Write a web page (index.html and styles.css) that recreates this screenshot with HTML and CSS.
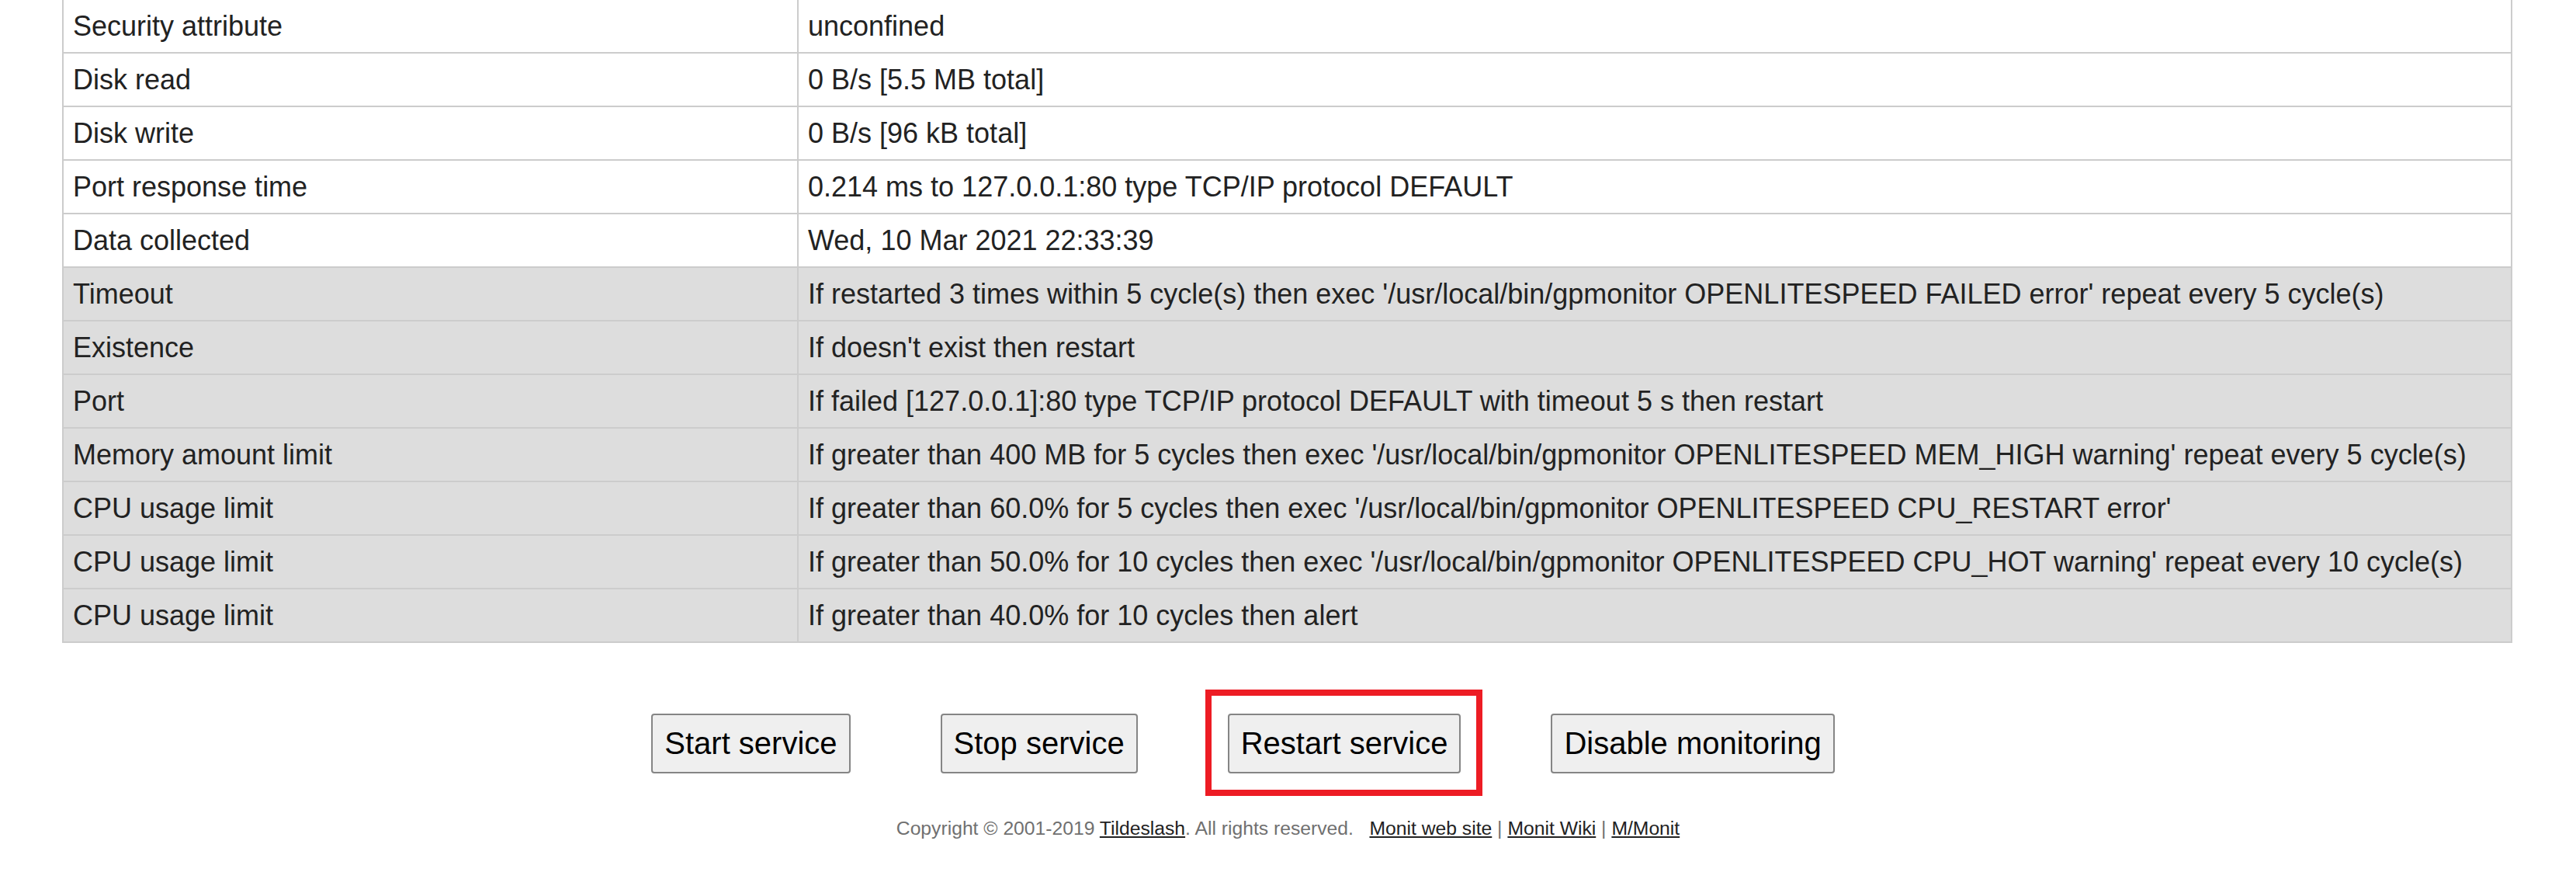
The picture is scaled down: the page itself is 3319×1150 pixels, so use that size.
FILE: index.html
```html
<!DOCTYPE html>
<html lang="en">
  <head>
    <meta charset="utf-8" />
    <title>Monit: openlitespeed</title>
    <link rel="stylesheet" href="styles.css">
  </head>
  <body>
    <div class="content">
      <table class="status">
        <tr><td class="key">Security attribute</td><td>unconfined</td></tr>
        <tr><td class="key">Disk read</td><td>0 B/s [5.5 MB total]</td></tr>
        <tr><td class="key">Disk write</td><td>0 B/s [96 kB total]</td></tr>
        <tr><td class="key">Port response time</td><td>0.214 ms to 127.0.0.1:80 type TCP/IP protocol DEFAULT</td></tr>
        <tr><td class="key">Data collected</td><td>Wed, 10 Mar 2021 22:33:39</td></tr>
        <tr class="rule"><td class="key">Timeout</td><td>If restarted 3 times within 5 cycle(s) then exec '/usr/local/bin/gpmonitor OPENLITESPEED FAILED error' repeat every 5 cycle(s)</td></tr>
        <tr class="rule"><td class="key">Existence</td><td>If doesn't exist then restart</td></tr>
        <tr class="rule"><td class="key">Port</td><td>If failed [127.0.0.1]:80 type TCP/IP protocol DEFAULT with timeout 5 s then restart</td></tr>
        <tr class="rule"><td class="key">Memory amount limit</td><td>If greater than 400 MB for 5 cycles then exec '/usr/local/bin/gpmonitor OPENLITESPEED MEM_HIGH warning' repeat every 5 cycle(s)</td></tr>
        <tr class="rule"><td class="key">CPU usage limit</td><td>If greater than 60.0% for 5 cycles then exec '/usr/local/bin/gpmonitor OPENLITESPEED CPU_RESTART error'</td></tr>
        <tr class="rule"><td class="key">CPU usage limit</td><td>If greater than 50.0% for 10 cycles then exec '/usr/local/bin/gpmonitor OPENLITESPEED CPU_HOT warning' repeat every 10 cycle(s)</td></tr>
        <tr class="rule"><td class="key">CPU usage limit</td><td>If greater than 40.0% for 10 cycles then alert</td></tr>
      </table>

      <div class="actions">
        <div class="action"><button class="btn">Start service</button></div>
        <div class="action"><button class="btn">Stop service</button></div>
        <div class="action marked"><button class="btn">Restart service</button></div>
        <div class="action"><button class="btn">Disable monitoring</button></div>
      </div>

      <p class="footer">
        Copyright &copy; 2001-2019 <a href="#">Tildeslash</a>. All rights reserved. &nbsp;&nbsp;<a href="#">Monit web site</a> | <a href="#">Monit Wiki</a> | <a href="#">M/Monit</a>
      </p>
    </div>
  </body>
</html>
```

FILE: styles.css
```css
html,
body {
  margin: 0;
  padding: 0;
  background-color: #ffffff;
}
body {
  color: #222222;
  font-family: "Liberation Sans", Arial, Helvetica, sans-serif;
  font-size: 36px;
}
.content {
  width: 100%;
}
.status {
  margin: 0 82px 0 80px;
  width: calc(100% - 162px);
  border-collapse: separate;
  border-spacing: 0;
  border-left: 2px solid #cccccc;
  border-right: 2px solid #cccccc;
  table-layout: fixed;
}
.status td {
  padding: 14px 12px 13px;
  border-bottom: 2px solid #cccccc;
  background: #ffffff;
  line-height: 40px;
  white-space: nowrap;
}
.status td.key {
  box-sizing: border-box;
  width: 947px;
  border-right: 2px solid #cccccc;
}
.status tr.rule td {
  background: #dddddd;
}
.actions {
  display: flex;
  justify-content: center;
  margin-top: 91px;
}
.action {
  position: relative;
  margin-right: 116px;
}
.marked::after {
  content: "";
  position: absolute;
  top: -31px;
  bottom: -29px;
  left: -29px;
  right: -28px;
  border: 8px solid #ed1c24;
  pointer-events: none;
}
.btn {
  font-family: "Liberation Sans", Arial, Helvetica, sans-serif;
  font-size: 40px;
  line-height: 46px;
  color: #000000;
  background: #efefef;
  border: 2px solid #858585;
  border-radius: 4px;
  padding: 13px 15px 14px;
  margin: 0;
  cursor: pointer;
}
.footer {
  margin: 57px 0 0;
  text-align: center;
  font-size: 24.7px;
  color: #707070;
}
.footer a {
  color: #222222;
  text-decoration: underline;
}
```
